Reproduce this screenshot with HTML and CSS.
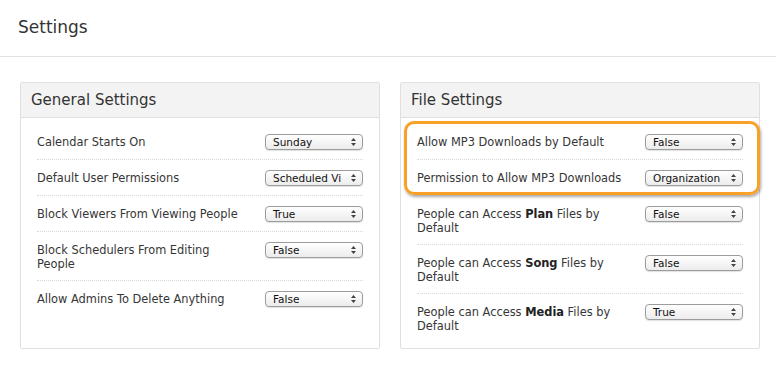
FILE: index.html
```html
<!DOCTYPE html>
<html lang="en">
<head>
    <meta charset="UTF-8">
    <title>Settings</title>
    <link rel="stylesheet" href="styles.css">
</head>
<body>

    <div class="page-header">
        <h1>Settings</h1>
    </div>

    <div class="settings-grid">
        <div class="panel">
            <div class="panel-heading">General Settings</div>
            <div class="panel-body">
                <div class="setting-row">
                    <span class="setting-label">Calendar Starts On</span>
                    <span class="fake-select">Sunday</span>
                </div>
                <div class="setting-row">
                    <span class="setting-label">Default User Permissions</span>
                    <span class="fake-select">Scheduled Vi</span>
                </div>
                <div class="setting-row">
                    <span class="setting-label">Block Viewers From Viewing People</span>
                    <span class="fake-select">True</span>
                </div>
                <div class="setting-row">
                    <span class="setting-label">Block Schedulers From Editing<br>People</span>
                    <span class="fake-select">False</span>
                </div>
                <div class="setting-row">
                    <span class="setting-label">Allow Admins To Delete Anything</span>
                    <span class="fake-select">False</span>
                </div>
            </div>
        </div>

        <div class="panel">
            <div class="panel-heading">File Settings</div>
            <div class="panel-body">
                <!-- highlighted group -->
                <div class="highlight">
                    <div class="setting-row">
                        <span class="setting-label">Allow MP3 Downloads by Default</span>
                        <span class="fake-select">False</span>
                    </div>
                    <div class="setting-row">
                        <span class="setting-label">Permission to Allow MP3 Downloads</span>
                        <span class="fake-select">Organization</span>
                    </div>
                </div>
                <div class="setting-row">
                    <span class="setting-label">People can Access <b>Plan</b> Files by<br>Default</span>
                    <span class="fake-select">False</span>
                </div>
                <div class="setting-row">
                    <span class="setting-label">People can Access <b>Song</b> Files by<br>Default</span>
                    <span class="fake-select">False</span>
                </div>
                <div class="setting-row">
                    <span class="setting-label">People can Access <b>Media</b> Files by<br>Default</span>
                    <span class="fake-select">True</span>
                </div>
            </div>
        </div>
    </div>

</body>
</html>
```

FILE: styles.css
```css
body {
    margin: 0;
    font-family: "DejaVu Sans", "Lucida Grande", sans-serif;
    background-color: #fff;
    color: #333;
}

.page-header {
    height: 56px;
    padding-left: 18px;
    border-bottom: 1px solid #e2e2e2;
    display: flex;
    align-items: center;
}

.page-header h1 {
    margin: 0 0 3px 0;
    font-size: 17px;
    font-weight: normal;
    color: #333;
}

.settings-grid {
    display: grid;
    grid-template-columns: 360px 360px;
    gap: 20px;
    padding: 25px 20px;
}

.panel {
    border: 1px solid #e0e0e0;
    border-radius: 2px;
}

.panel-heading {
    height: 34px;
    padding-left: 10px;
    display: flex;
    align-items: center;
    background-color: #f3f3f3;
    border-bottom: 1px solid #e0e0e0;
    font-size: 15px;
    color: #333;
}

.panel-body {
    padding: 6px 0 6px;
}

.setting-row {
    margin: 0 16px;
    padding: 10px 0 9px;
    display: flex;
    align-items: flex-start;
    border-bottom: 1px dotted #d8d8d8;
}

.panel-body > .setting-row:last-child {
    border-bottom: none;
}

.setting-label {
    flex: 0 0 210px;
    margin-top: 1px;
    font-size: 11.4px;
    line-height: 14px;
    color: #363636;
}

.setting-label b {
    color: #222;
}

.fake-select {
    position: relative;
    margin-left: auto;
    width: 98px;
    height: 16px;
    box-sizing: border-box;
    padding-left: 7px;
    border: 1px solid #9c9c9c;
    border-radius: 4px;
    background: linear-gradient(#ffffff, #ececec);
    box-shadow: 0 1px 1px rgba(0,0,0,0.12);
    font-size: 10.5px;
    line-height: 14px;
    color: #111;
    white-space: nowrap;
    overflow: hidden;
}

/* little up/down arrows of a mac select */
.fake-select::after {
    content: "";
    position: absolute;
    right: 6px;
    top: 3px;
    width: 5px;
    height: 8px;
    background: url("data:image/svg+xml,%3Csvg xmlns='http://www.w3.org/2000/svg' width='5' height='8' viewBox='0 0 5 8'%3E%3Cpath d='M0 3L2.5 0L5 3Z M0 5L2.5 8L5 5Z' fill='%23444'/%3E%3C/svg%3E") no-repeat;
}

.highlight {
    position: relative;
}

.highlight .setting-row:last-child {
    border-bottom: 1px solid transparent;
}

.highlight::after {
    content: "";
    position: absolute;
    top: -3px;
    bottom: 1px;
    left: 3px;
    right: -1px;
    border: 3px solid #f7a128;
    border-radius: 10px;
    box-shadow: 1px 2px 3px rgba(0,0,0,0.35);
    pointer-events: none;
}
```
